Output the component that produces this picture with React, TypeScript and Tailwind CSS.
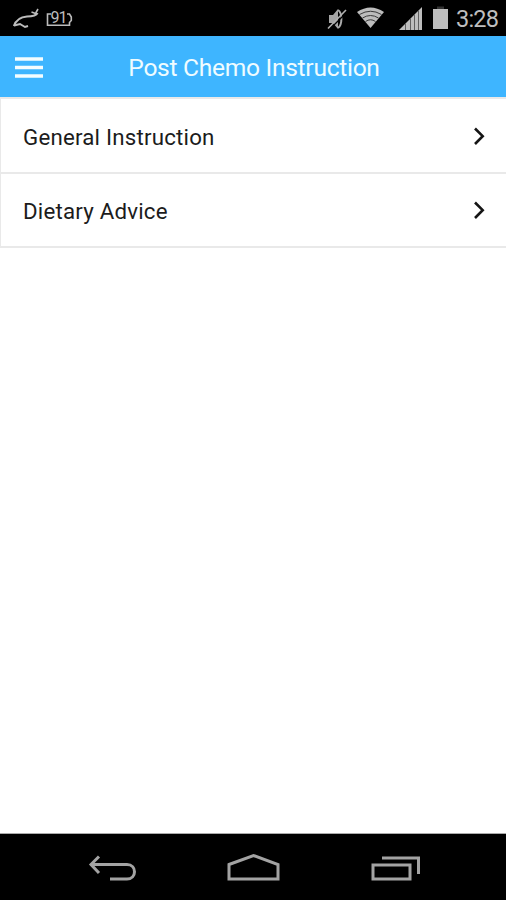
import type { ReactNode } from 'react';

interface MenuRowProps {
  label: string;
  className: string;
}

function ChevronIcon() {
  return (
    <svg width="12" height="20" viewBox="0 0 12 20" fill="none" stroke="#151515" strokeWidth="2.6">
      <path d="M2 2.5 L9.7 10.2 L2 18" />
    </svg>
  );
}

function MenuRow({ label, className }: MenuRowProps) {
  return (
    <button className={`flex w-full items-center justify-between border-b-2 border-l border-[#e9e9e9] pr-[21px] pl-[22px] text-left ${className}`}>
      <span className="pt-0.5 text-[22.3px] leading-7 tracking-[0.2px] text-[#1c1c1c]">{label}</span>
      <ChevronIcon />
    </button>
  );
}

function StatusBar() {
  return (
    <div className="flex h-9 shrink-0 items-center justify-between bg-black">
      <svg width="80" height="36" viewBox="0 0 80 36" fill="none" stroke="#bcbcbc">
        {/* Running cat */}
        <path d="M14 26 C16 20 20 17 27 16.5 C32 16.5 36 16 37.5 13" strokeWidth="2.2" />
        <path d="M38 9 L35.5 13.5 L31.5 12" strokeWidth="1.6" />
        <path d="M14 25.5 L20 24 L25 27 L28 26" strokeWidth="2" />
        {/* Battery badge */}
        <path d="M51 14 H47.5 V25.2 H69.5 V22.5 L71.3 20.5 V17 L69.5 14 H67" strokeWidth="1.6" />
        <text x="50.5" y="22.7" fontSize="16" fill="#bcbcbc" stroke="none" textLength="17">91</text>
      </svg>
      <div className="flex items-center">
        <svg width="130" height="36" viewBox="322 0 130 36" fill="#bdbdbd">
          {/* Muted speaker */}
          <path d="M329 15 H333 L338 9 V29 L333 23 H329 Z" fill="#a5a5a5" />
          <path d="M338 10 C342.5 13 342.5 25 338 28" fill="none" stroke="#aaa" strokeWidth="2" />
          <path d="M329.5 29.5 L347.5 11.5" stroke="#000" strokeWidth="1.3" />
          <path d="M328 28.5 L346 10" stroke="#b0b0b0" strokeWidth="1.6" />
          {/* Wifi */}
          <path d="M357 12 Q370.5 3 384 12 L370.5 28 Z" />
          <g fill="none" stroke="#3a3a3a" strokeWidth="1">
            <path d="M359.5 14.5 Q370.5 8 381.5 14.5" />
            <path d="M362.5 18 Q370.5 13 378.5 18" />
            <path d="M365.5 21.5 Q370.5 18 375.5 21.5" />
          </g>
          {/* Signal */}
          <path d="M399 30 L422 7 V30 Z" />
          <path d="M405.5 23.5 V30 M410.5 18.5 V30 M414.5 14.5 V30 M418.5 10.5 V30" stroke="#555" strokeWidth="0.9" />
          {/* Battery */}
          <rect x="437" y="6.5" width="7" height="3" fill="#333" />
          <rect x="433" y="9" width="15" height="20" />
        </svg>
        <span className="w-[54px] pt-0.5 pl-1 text-[23.5px] leading-8 tracking-[-0.8px] text-[#bebebe]">3:28</span>
      </div>
    </div>
  );
}

function NavButton({ label, children }: { label: string; children: ReactNode }) {
  return (
    <button aria-label={label} className="flex w-[141px] justify-center">
      <svg width="60" height="40" viewBox="0 0 60 40" fill="none" stroke="#a3a3a3" strokeWidth="3">
        {children}
      </svg>
    </button>
  );
}

function NavigationBar() {
  return (
    <div className="flex h-[67px] shrink-0 items-center justify-center border-t border-[#aaa] bg-black">
      <NavButton label="Back">
        <path d="M17 9.5 L9 17.5 L17 26" />
        <path d="M10 17.5 H45 C55 17.5 55 32 45 32 H28" />
      </NavButton>
      <NavButton label="Home">
        <path d="M6 17.5 L30.5 8.5 L55 17.5 V32 H6 Z" />
      </NavButton>
      <NavButton label="Recent apps">
        <path d="M9 18 H46 V32 H9 Z" />
        <path d="M18 11 H54.5 V27" />
      </NavButton>
    </div>
  );
}

export default function App() {
  return (
    <div className="flex h-screen w-full flex-col overflow-hidden bg-white font-['Roboto',sans-serif]">
      <StatusBar />

      {/* App header */}
      <header className="flex h-[61px] shrink-0 items-center bg-[#3eb5ff] px-[15px]">
        <button aria-label="Menu" className="pt-0.5">
          <svg width="28" height="22" viewBox="0 0 28 22" stroke="#f4fdff" strokeWidth="3.6">
            <path d="M0 2 H28 M0 10.5 H28 M0 19 H28" />
          </svg>
        </button>
        <h1 className="flex-1 pt-0.5 pr-[26px] text-center text-[24.6px] leading-8 tracking-[-0.3px] text-[#effcff]">
          Post Chemo Instruction
        </h1>
      </header>

      <main className="flex-1 border-t-2 border-[#e9e9e9]">
        <MenuRow label="General Instruction" className="h-[75px]" />
        <MenuRow label="Dietary Advice" className="h-[74px]" />
      </main>

      <NavigationBar />
    </div>
  );
}
